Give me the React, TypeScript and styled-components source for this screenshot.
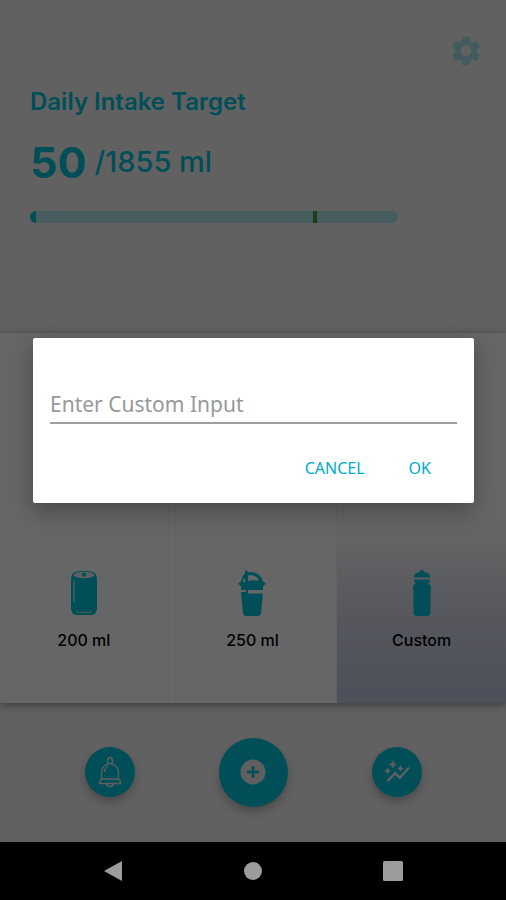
import React from "react";
import styled, { createGlobalStyle } from "styled-components";
import { MdAutoGraph, MdSettings } from "react-icons/md";

const teal = "#00c4da";

const GlobalStyle = createGlobalStyle`
  *, *::before, *::after { box-sizing: border-box; }
  body { margin: 0; background: #000; font-family: Inter, sans-serif; }
  button { border: 0; padding: 0; background: none; font: inherit; cursor: pointer; }
  svg { display: block; }
`;

const Screen = styled.div`
  display: flex;
  flex-direction: column;
  min-height: 100vh;
`;

const Content = styled.div`
  position: relative;
  flex: 1;
  display: flex;
  flex-direction: column;
  background: #f3f3f3;
`;

const Header = styled.header`
  display: flex;
  flex-direction: column;
  padding: 33px 22px 110px 30px;
`;

const SettingsButton = styled.button`
  align-self: flex-end;
  color: #a8e4ec;
`;

const Title = styled.h1`
  margin: 16px 0 0;
  font-size: 24px;
  line-height: 34px;
  font-weight: 600;
  color: ${teal};
`;

const Intake = styled.p`
  display: flex;
  align-items: center;
  gap: 8px;
  margin: 19px 0 0;
  font-size: 29px;
  line-height: 48px;
  font-weight: 500;
  color: ${teal};
`;

const Current = styled.strong`
  font-size: 43px;
  line-height: 48px;
  font-weight: 700;
`;

const Track = styled.div`
  position: relative;
  width: 81%;
  height: 12px;
  margin-top: 25px;
  border-radius: 6px;
  background: #b2e6ea;
  overflow: hidden;
`;

const Fill = styled.div`
  width: 6px;
  height: 100%;
  background: ${teal};
`;

const Marker = styled.div`
  position: absolute;
  top: 0;
  left: 77%;
  width: 4px;
  height: 100%;
  background: #4c9a48;
`;

const Grid = styled.main`
  display: grid;
  grid-template-columns: repeat(3, 1fr);
  grid-auto-rows: 185px;
  background: #fff;
  box-shadow: 0 2px 8px rgba(0, 0, 0, 0.4);
`;

const Tile = styled.button<{ $selected?: boolean }>`
  display: flex;
  flex-direction: column;
  align-items: center;
  justify-content: center;
  gap: 13px;
  border-right: 1px solid #f4f4f4;
  font-size: 16px;
  line-height: 22px;
  font-weight: 500;
  color: #000;
  background: ${(p) => (p.$selected ? "linear-gradient(#fdfdfd 5%, #d9dcea 50%, #c0c6e2)" : "#fff")};
  &:nth-child(3n) { border-right: 0; }
`;

const Actions = styled.footer`
  display: grid;
  grid-template-columns: repeat(3, 1fr);
  place-items: center;
  flex: 1;
  padding: 0 37px 1px 38px;
`;

const RoundButton = styled.button<{ $size: number }>`
  display: flex;
  align-items: center;
  justify-content: center;
  width: ${(p) => p.$size}px;
  height: ${(p) => p.$size}px;
  border-radius: 50%;
  background: ${teal};
  color: #eee;
  box-shadow: 0 5px 10px rgba(0, 0, 0, 0.25);
`;

const Scrim = styled.div`
  position: absolute;
  inset: 0;
  display: flex;
  align-items: center;
  justify-content: center;
  padding: 0 32px 1px 33px;
  background: rgba(0, 0, 0, 0.6);
`;

const Dialog = styled.form`
  display: flex;
  flex-direction: column;
  width: 100%;
  padding: 48px 17px 17px;
  border-radius: 2px;
  background: #fff;
  box-shadow: 0 8px 24px rgba(0, 0, 0, 0.3);
`;

const Field = styled.input`
  width: 100%;
  height: 38px;
  padding: 0;
  border: 0;
  border-bottom: 2px solid #a0a0a0;
  border-radius: 0;
  outline: 0;
  background: transparent;
  font: 400 21px/28px "Noto Sans", sans-serif;
  color: #333;
  &::placeholder { color: #999; opacity: 1; }
`;

const DialogActions = styled.div`
  display: flex;
  justify-content: flex-end;
  gap: 10px;
  margin-top: 26px;
  padding-right: 9px;
`;

const TextButton = styled.button`
  height: 36px;
  padding: 0 17px;
  font: 400 16px/22px "Noto Sans", sans-serif;
  color: #00acc8;
`;

const SystemBar = styled.nav`
  display: grid;
  grid-template-columns: repeat(3, 1fr);
  place-items: center;
  height: 58px;
  padding: 0 43px;
  background: #000;
`;

const CanIcon = () => (
  <svg width="26" height="46" viewBox="0 0 26 46">
    <path d="M1 5Q1 1 13 1T25 5L26 8V39Q25 45 20 45H6Q1 45 0 39V8Z" fill={teal} />
    <ellipse cx="13" cy="5" rx="10.500" ry="3.300" fill="#e4f2f4" />
    <path d="M11 3.500 14 2.500 15.500 4.500 13.500 7 11.500 5.500Z" fill={teal} />
    <path d="M3 10V32" fill="none" stroke="#a8dce2" strokeWidth="1.500" />
    <path d="M5 41.500Q8 42.500 13 42.500T21 41.500" fill="none" stroke="#b7e8ee" strokeWidth="1" />
  </svg>
);

const CupIcon = () => (
  <svg width="28" height="46" viewBox="0 0 28 46" fill={teal}>
    <path d="M7 3V1L8.500 0 9.500 2Q22 1 25 11.500L28 13.500 25 16V20H10V22H8V20H3V16L0 13.500 3 11.500Q4 6 7 3ZM10 5.500V11Q15 9.500 21 11Q19 4.500 10 5.500ZM7 7.500Q5 9 5 12H7Z" fillRule="evenodd" />
    <path d="M3 22H10V23.500H25L23 43Q22.500 46 20 46H8Q5.500 46 5 43Z" />
  </svg>
);

const BottleIcon = () => (
  <svg width="18" height="46" viewBox="0 0 18 46" fill={teal}>
    <path d="M.5 7.500 2 4Q4 2 7 2L7.500 0H10.500L11 2Q14 2 16 4L17.500 7.500Z" />
    <path d="M1 9.500H17V11L15.500 13.500 18 16V19L17.500 21V43Q17 46 14 46H4Q1 46 .5 43V21L0 19V16L2.500 13.500 1 11Z" />
  </svg>
);

const BellIcon = () => (
  <svg width="24" height="32" viewBox="0 0 24 32" fill="none" stroke="currentColor" strokeWidth="1.300" strokeLinejoin="round" strokeLinecap="round">
    <path d="M10 8 9.500 5Q10 1.500 12 1.500T14.500 5L14 8M3.500 23V16Q4 10 10 8Q12 7 14 8Q20 10 20.500 16V23M3.500 23H20.500L22.500 25.500V27.500H1.500V25.500ZM8.500 28Q9 30.500 12 30.500T15.500 28M6.500 15.500Q7 11.500 10 10.500" />
  </svg>
);

const PlusIcon = () => (
  <svg width="26" height="26" viewBox="0 0 26 26">
    <circle cx="13" cy="13" r="12.500" fill="currentColor" />
    <path d="M13 7V19M7 13H19" stroke={teal} strokeWidth="2.500" />
  </svg>
);

export default function App() {
  return (
    <Screen>
      <GlobalStyle />
      <Content>
        <Header>
          <SettingsButton aria-label="Settings"><MdSettings size={36} /></SettingsButton>
          <Title>Daily Intake Target</Title>
          <Intake><Current>50</Current><span>/1855 ml</span></Intake>
          <Track><Fill /><Marker /></Track>
        </Header>
        <Grid>
          <Tile /><Tile /><Tile />
          <Tile><CanIcon />200 ml</Tile>
          <Tile><CupIcon />250 ml</Tile>
          <Tile $selected><BottleIcon />Custom</Tile>
        </Grid>
        <Actions>
          <RoundButton $size={50} aria-label="Reminders"><BellIcon /></RoundButton>
          <RoundButton $size={69} aria-label="Add intake"><PlusIcon /></RoundButton>
          <RoundButton $size={50} aria-label="Statistics"><MdAutoGraph size={28} /></RoundButton>
        </Actions>
        <Scrim>
          <Dialog role="dialog" aria-modal="true" aria-label="Custom input" onSubmit={(e) => e.preventDefault()}>
            <Field aria-label="Enter Custom Input" placeholder="Enter Custom Input" inputMode="numeric" />
            <DialogActions>
              <TextButton type="button">CANCEL</TextButton>
              <TextButton type="submit">OK</TextButton>
            </DialogActions>
          </Dialog>
        </Scrim>
      </Content>
      <SystemBar>
        <button aria-label="Back"><svg width="20" height="22" viewBox="0 0 20 22"><path d="M19 1V21L1 11Z" fill="#9c9c9c" /></svg></button>
        <button aria-label="Home"><svg width="18" height="18" viewBox="0 0 18 18"><circle cx="9" cy="9" r="9" fill="#9c9c9c" /></svg></button>
        <button aria-label="Recent apps"><svg width="20" height="20" viewBox="0 0 20 20"><rect width="20" height="20" rx="1.500" fill="#9c9c9c" /></svg></button>
      </SystemBar>
    </Screen>
  );
}
